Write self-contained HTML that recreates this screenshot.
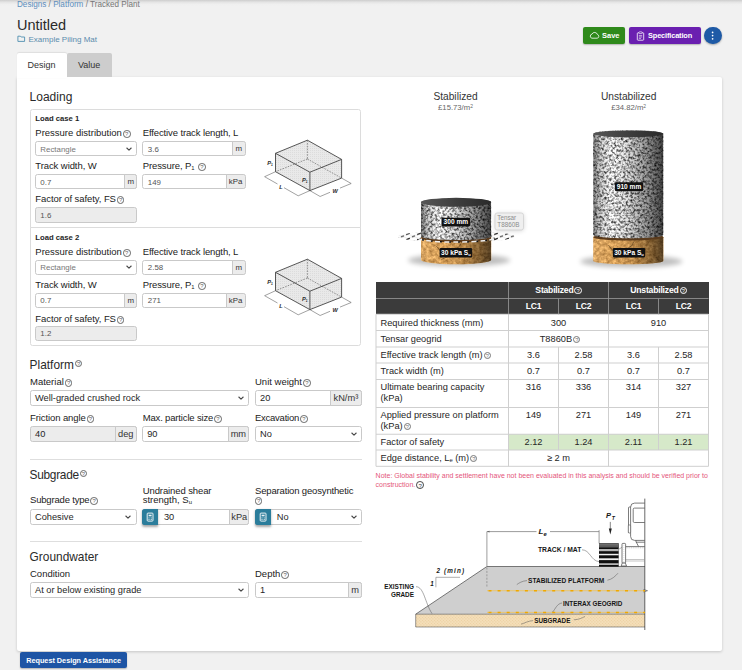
<!DOCTYPE html>
<html lang="en"><head><meta charset="utf-8"><title>Untitled - Tracked Plant</title>
<style>
html,body{margin:0;padding:0;}
body{width:742px;height:670px;overflow:hidden;position:relative;background:#f1f1f1;font-family:"Liberation Sans",sans-serif;color:#333;}
.t{position:absolute;white-space:nowrap;}
.b{position:absolute;}
.q{display:inline-block;position:relative;box-sizing:border-box;border:0.7px solid #555;border-radius:50%;text-align:center;margin-left:1px;font-weight:400;vertical-align:baseline;font-style:normal;}
.inp{position:absolute;box-sizing:border-box;border:1px solid #c9c9c9;border-radius:2.5px;}
.addon{position:absolute;box-sizing:border-box;border:1px solid #c9c9c9;border-radius:0 2.5px 2.5px 0;background:#ececec;text-align:center;color:#333;}
.cbtn{position:absolute;background:#2b7d9b;border-radius:2.5px 0 0 2.5px;box-shadow:0 1.5px 2.5px rgba(0,0,0,.35);}
.hr{position:absolute;height:1px;background:#dedede;}
sub{font-size:5.9px;vertical-align:baseline;position:relative;top:0.25em;line-height:0;}
sup{font-size:4.9px;vertical-align:baseline;position:relative;top:-0.45em;line-height:0;}
</style></head><body>

<div class="b" style="left:0;top:0;width:742px;height:6px;background:linear-gradient(#cdcdcd,#e4e4e4 35%,#efefef 70%,#f1f1f1);"></div>
<div class="t " style="left:17.00px;top:0px;font-size:8.15px;line-height:9px;height:9px;color:#777;"><span style="color:#5d8fbd">Designs</span> / <span style="color:#5d8fbd">Platform</span> / Tracked Plant</div>
<div class="t " style="left:17.00px;top:17px;font-size:14.5px;line-height:16px;height:16px;color:#2a2a2a;">Untitled</div>
<svg class="b" style="left:17px;top:35px" width="9" height="8" viewBox="0 0 9 8"><path d="M0.9 1.2 H3.4 L4.1 2 H7.6 V6.4 H0.9 Z" fill="none" stroke="#4f8fb0" stroke-width="0.9" stroke-linejoin="round"/></svg>
<div class="t " style="left:28.50px;top:35px;font-size:8px;line-height:9px;height:9px;color:#5a8cad;">Example Piling Mat</div>
<div class="b" style="left:583px;top:27px;width:42px;height:17px;background:#2f8a1b;border-radius:2px;box-shadow:0 1px 1.5px rgba(0,0,0,.25);"></div>
<svg class="b" style="left:589px;top:31px" width="11" height="9" viewBox="0 0 11 9"><path d="M2.9 7.2 H8.2 A1.9 1.9 0 0 0 8.4 3.5 A2.9 2.9 0 0 0 3 3.1 A2.1 2.1 0 0 0 2.9 7.2 Z" fill="none" stroke="#fff" stroke-width="0.8"/></svg>
<div class="t " style="left:602.00px;top:31px;font-size:7.5px;line-height:9px;height:9px;color:#fff;font-weight:700;">Save</div>
<div class="b" style="left:629px;top:27px;width:71.5px;height:17px;background:#6a1fb0;border-radius:2px;box-shadow:0 1px 1.5px rgba(0,0,0,.25);"></div>
<svg class="b" style="left:635.5px;top:30.5px" width="9" height="10" viewBox="0 0 9 10"><rect x="1.3" y="1.8" width="6.4" height="7.4" rx="0.7" fill="none" stroke="#fff" stroke-width="0.8"/><rect x="3" y="0.8" width="3" height="1.8" rx="0.5" fill="#6a1fb0" stroke="#fff" stroke-width="0.6"/><path d="M2.8 4.6H6.2M2.8 6H6.2M2.8 7.4H5" stroke="#fff" stroke-width="0.6"/></svg>
<div class="t " style="left:648.00px;top:31px;font-size:7.4px;line-height:9px;height:9px;color:#fff;font-weight:700;letter-spacing:-0.15px;">Specification</div>
<div class="b" style="left:704.4px;top:26.8px;width:17.2px;height:17.2px;background:#1e5aa6;border-radius:50%;box-shadow:0 1px 2px rgba(0,0,0,.3);"></div>
<svg class="b" style="left:704.4px;top:26.8px" width="17.2" height="17.2" viewBox="0 0 17.2 17.2"><circle cx="8.6" cy="5.4" r="0.85" fill="#fff"/><circle cx="8.6" cy="8.6" r="0.85" fill="#fff"/><circle cx="8.6" cy="11.8" r="0.85" fill="#fff"/></svg>
<div class="b" style="left:17px;top:77px;width:705px;height:573.5px;background:#fff;border-radius:0 2px 2px 2px;box-shadow:0 1px 3px rgba(0,0,0,.18);"></div>
<div class="b" style="left:17px;top:53.4px;width:49.8px;height:25px;background:#fff;border-radius:2px 2px 0 0;box-shadow:0 -0.5px 1px rgba(0,0,0,.08);"></div>
<div class="b" style="left:66.8px;top:53.4px;width:44.9px;height:23.7px;background:#cdcdcd;border-radius:2px 2px 0 0;"></div>
<div class="t " style="left:27.50px;top:60px;font-size:9px;line-height:10px;height:10px;color:#333;">Design</div>
<div class="t " style="left:78.00px;top:60px;font-size:9px;line-height:10px;height:10px;color:#333;">Value</div>
<div class="t " style="left:29.60px;top:90px;font-size:12px;line-height:14px;height:14px;color:#2a2a2a;">Loading</div>
<div class="b" style="left:30.4px;top:109.3px;width:331px;height:119px;box-sizing:border-box;border:1px solid #dcdcdc;border-radius:2.5px 2.5px 0 0;"></div>
<div class="t " style="left:35.30px;top:114px;font-size:7.7px;line-height:9px;height:9px;color:#1f1f1f;font-weight:700;">Load case 1</div>
<div class="t " style="left:35.30px;top:127px;font-size:9.5px;line-height:11px;height:11px;color:#222;">Pressure distribution<span class="q" style="width:7.6px;height:7.6px;font-size:5.93px;line-height:7.6px;border-color:#666;color:#666;top:0px">?</span></div>
<div class="t " style="left:142.70px;top:127px;font-size:9.5px;line-height:11px;height:11px;color:#222;letter-spacing:-0.12px;">Effective track length, L</div>
<div class="inp" style="left:35.3px;top:141.4px;width:101.89999999999999px;height:15.0px;background:#fff;"></div>
<div class="t " style="left:40.30px;top:145px;font-size:7.9px;line-height:9px;height:9px;color:#777;">Rectangle</div>
<svg class="b" style="left:125.69999999999999px;top:146.20000000000002px" width="6" height="6" viewBox="0 0 6 6"><path d="M0.8 2 L3 4.1 L5.2 2" fill="none" stroke="#444" stroke-width="1.05" stroke-linecap="round" stroke-linejoin="round"/></svg>
<div class="inp" style="left:142.2px;top:141.4px;width:103.30000000000001px;height:15.0px;background:#fff;"></div>
<div class="t " style="left:147.80px;top:145px;font-size:7.9px;line-height:9px;height:9px;color:#555;">3.6</div>
<div class="addon" style="left:232px;top:141.4px;width:13.5px;height:15.0px;font-size:7.9px;line-height:14.0px;">m</div>
<div class="t " style="left:35.30px;top:160px;font-size:9.5px;line-height:11px;height:11px;color:#222;"><span style="letter-spacing:-0.08px">Track width, W</span></div>
<div class="t " style="left:142.70px;top:160px;font-size:9.5px;line-height:11px;height:11px;color:#222;letter-spacing:-0.1px;">Pressure, P<sub>1</sub> <span class="q" style="width:7.6px;height:7.6px;font-size:5.93px;line-height:7.6px;border-color:#666;color:#666;top:0px">?</span></div>
<div class="inp" style="left:35.3px;top:174.2px;width:101.89999999999999px;height:15.100000000000023px;background:#fff;"></div>
<div class="t " style="left:40.30px;top:178px;font-size:7.9px;line-height:9px;height:9px;color:#555;">0.7</div>
<div class="addon" style="left:124.4px;top:174.2px;width:12.799999999999983px;height:15.100000000000023px;font-size:7.9px;line-height:14.100000000000023px;">m</div>
<div class="inp" style="left:142.2px;top:174.2px;width:103.30000000000001px;height:15.100000000000023px;background:#fff;"></div>
<div class="t " style="left:147.80px;top:178px;font-size:7.9px;line-height:9px;height:9px;color:#555;">149</div>
<div class="addon" style="left:225.75px;top:174.2px;width:19.75px;height:15.100000000000023px;font-size:7.9px;line-height:14.100000000000023px;">kPa</div>
<div class="t " style="left:35.30px;top:193px;font-size:9.5px;line-height:11px;height:11px;color:#222;"><span style="letter-spacing:-0.08px">Factor of safety, FS</span><span class="q" style="width:7.6px;height:7.6px;font-size:5.93px;line-height:7.6px;border-color:#666;color:#666;top:0px">?</span></div>
<div class="inp" style="left:35.3px;top:207.4px;width:101.89999999999999px;height:15.199999999999989px;background:#ececec;"></div>
<div class="t " style="left:40.30px;top:211px;font-size:7.9px;line-height:9px;height:9px;color:#555;">1.6</div>
<svg class="b" style="left:255px;top:130.0px" width="105" height="75" viewBox="255 130 105 75">
<defs><pattern id="dots0.0" width="2" height="2" patternUnits="userSpaceOnUse"><rect width="2" height="2" fill="#e9e9e9"/><rect width="1" height="1" fill="#dcdcdc"/></pattern></defs>
<path d="M307.4 140.2 L275.5 153.3 L275.5 171.7 L309.9 190.6 L341.6 178.1 L341.6 159.4 Z" fill="url(#dots0.0)" stroke="none"/>
<path d="M307.4 140.2 L307.4 159 M307.4 159 L275.5 171.7 M307.4 159 L341.6 178.1" fill="none" stroke="#555" stroke-width="0.6" stroke-dasharray="1.6 1.2"/>
<path d="M307.4 140.2 L275.5 153.3 L309.9 172.2 L341.6 159.4 Z M275.5 153.3 L275.5 171.7 L309.9 190.6 L341.6 178.1 L341.6 159.4 M309.9 172.2 L309.9 190.6" fill="none" stroke="#444" stroke-width="0.9" stroke-linejoin="round"/>
<path d="M275.5 171.7 L264.6 176.7 L277.5 184 M284 187.7 L298.2 195.8 L309.9 190.6 L320.1 196.5 L330 192.3 M340 188.1 L351.2 183.5 L341.6 178.1" fill="none" stroke="#444" stroke-width="0.5"/>
<text x="267.2" y="164.6" font-family="Liberation Sans, sans-serif" font-size="5.7" font-weight="700" font-style="italic" fill="#2a2a2a">P<tspan font-size="3.2" dy="1">1</tspan></text>
<text x="302" y="181.8" font-family="Liberation Sans, sans-serif" font-size="5.7" font-weight="700" font-style="italic" fill="#2a2a2a">P<tspan font-size="3.2" dy="1">1</tspan></text>
<text x="279.2" y="189.2" font-family="Liberation Sans, sans-serif" font-size="5.6" font-weight="700" font-style="italic" fill="#2a2a2a">L</text>
<text x="332.6" y="192.6" font-family="Liberation Sans, sans-serif" font-size="5.6" font-weight="700" font-style="italic" fill="#2a2a2a">W</text>
</svg>
<div class="b" style="left:30.4px;top:227.3px;width:331px;height:119px;box-sizing:border-box;border:1px solid #dcdcdc;border-radius:0 0 2.5px 2.5px;"></div>
<div class="t " style="left:35.30px;top:233px;font-size:7.7px;line-height:9px;height:9px;color:#1f1f1f;font-weight:700;">Load case 2</div>
<div class="t " style="left:35.30px;top:246px;font-size:9.5px;line-height:11px;height:11px;color:#222;">Pressure distribution<span class="q" style="width:7.6px;height:7.6px;font-size:5.93px;line-height:7.6px;border-color:#666;color:#666;top:0px">?</span></div>
<div class="t " style="left:142.70px;top:246px;font-size:9.5px;line-height:11px;height:11px;color:#222;letter-spacing:-0.12px;">Effective track length, L</div>
<div class="inp" style="left:35.3px;top:259.7px;width:101.89999999999999px;height:14.900000000000034px;background:#fff;"></div>
<div class="t " style="left:40.30px;top:263px;font-size:7.9px;line-height:9px;height:9px;color:#777;">Rectangle</div>
<svg class="b" style="left:125.69999999999999px;top:264.45px" width="6" height="6" viewBox="0 0 6 6"><path d="M0.8 2 L3 4.1 L5.2 2" fill="none" stroke="#444" stroke-width="1.05" stroke-linecap="round" stroke-linejoin="round"/></svg>
<div class="inp" style="left:142.2px;top:259.7px;width:103.30000000000001px;height:14.900000000000034px;background:#fff;"></div>
<div class="t " style="left:147.80px;top:263px;font-size:7.9px;line-height:9px;height:9px;color:#555;">2.58</div>
<div class="addon" style="left:232px;top:259.7px;width:13.5px;height:14.900000000000034px;font-size:7.9px;line-height:13.900000000000034px;">m</div>
<div class="t " style="left:35.30px;top:279px;font-size:9.5px;line-height:11px;height:11px;color:#222;"><span style="letter-spacing:-0.08px">Track width, W</span></div>
<div class="t " style="left:142.70px;top:279px;font-size:9.5px;line-height:11px;height:11px;color:#222;letter-spacing:-0.1px;">Pressure, P<sub>1</sub> <span class="q" style="width:7.6px;height:7.6px;font-size:5.93px;line-height:7.6px;border-color:#666;color:#666;top:0px">?</span></div>
<div class="inp" style="left:35.3px;top:293px;width:101.89999999999999px;height:14.699999999999989px;background:#fff;"></div>
<div class="t " style="left:40.30px;top:296px;font-size:7.9px;line-height:9px;height:9px;color:#555;">0.7</div>
<div class="addon" style="left:124.4px;top:293px;width:12.799999999999983px;height:14.699999999999989px;font-size:7.9px;line-height:13.699999999999989px;">m</div>
<div class="inp" style="left:142.2px;top:293px;width:103.30000000000001px;height:14.699999999999989px;background:#fff;"></div>
<div class="t " style="left:147.80px;top:296px;font-size:7.9px;line-height:9px;height:9px;color:#555;">271</div>
<div class="addon" style="left:225.75px;top:293px;width:19.75px;height:14.699999999999989px;font-size:7.9px;line-height:13.699999999999989px;">kPa</div>
<div class="t " style="left:35.30px;top:313px;font-size:9.5px;line-height:11px;height:11px;color:#222;"><span style="letter-spacing:-0.08px">Factor of safety, FS</span><span class="q" style="width:7.6px;height:7.6px;font-size:5.93px;line-height:7.6px;border-color:#666;color:#666;top:0px">?</span></div>
<div class="inp" style="left:35.3px;top:326.3px;width:101.89999999999999px;height:14.5px;background:#ececec;"></div>
<div class="t " style="left:40.30px;top:329px;font-size:7.9px;line-height:9px;height:9px;color:#555;">1.2</div>
<svg class="b" style="left:255px;top:248.5px" width="105" height="75" viewBox="255 130 105 75">
<defs><pattern id="dots118.5" width="2" height="2" patternUnits="userSpaceOnUse"><rect width="2" height="2" fill="#e9e9e9"/><rect width="1" height="1" fill="#dcdcdc"/></pattern></defs>
<path d="M307.4 140.2 L275.5 153.3 L275.5 171.7 L309.9 190.6 L341.6 178.1 L341.6 159.4 Z" fill="url(#dots118.5)" stroke="none"/>
<path d="M307.4 140.2 L307.4 159 M307.4 159 L275.5 171.7 M307.4 159 L341.6 178.1" fill="none" stroke="#555" stroke-width="0.6" stroke-dasharray="1.6 1.2"/>
<path d="M307.4 140.2 L275.5 153.3 L309.9 172.2 L341.6 159.4 Z M275.5 153.3 L275.5 171.7 L309.9 190.6 L341.6 178.1 L341.6 159.4 M309.9 172.2 L309.9 190.6" fill="none" stroke="#444" stroke-width="0.9" stroke-linejoin="round"/>
<path d="M275.5 171.7 L264.6 176.7 L277.5 184 M284 187.7 L298.2 195.8 L309.9 190.6 L320.1 196.5 L330 192.3 M340 188.1 L351.2 183.5 L341.6 178.1" fill="none" stroke="#444" stroke-width="0.5"/>
<text x="267.2" y="164.6" font-family="Liberation Sans, sans-serif" font-size="5.7" font-weight="700" font-style="italic" fill="#2a2a2a">P<tspan font-size="3.2" dy="1">1</tspan></text>
<text x="302" y="181.8" font-family="Liberation Sans, sans-serif" font-size="5.7" font-weight="700" font-style="italic" fill="#2a2a2a">P<tspan font-size="3.2" dy="1">1</tspan></text>
<text x="279.2" y="189.2" font-family="Liberation Sans, sans-serif" font-size="5.6" font-weight="700" font-style="italic" fill="#2a2a2a">L</text>
<text x="332.6" y="192.6" font-family="Liberation Sans, sans-serif" font-size="5.6" font-weight="700" font-style="italic" fill="#2a2a2a">W</text>
</svg>
<div class="t " style="left:29.60px;top:358px;font-size:11.9px;line-height:14px;height:14px;color:#2a2a2a;">Platform<span style="position:relative;top:-3.4px"><span class="q" style="width:7.4px;height:7.4px;font-size:5.77px;line-height:7.4px;border-color:#666;color:#666;top:0px">?</span></span></div>
<div class="t " style="left:30.00px;top:376px;font-size:9.5px;line-height:11px;height:11px;color:#222;">Material<span class="q" style="width:7.6px;height:7.6px;font-size:5.93px;line-height:7.6px;border-color:#666;color:#666;top:0px">?</span></div>
<div class="t " style="left:255.00px;top:376px;font-size:9.5px;line-height:11px;height:11px;color:#222;">Unit weight<span class="q" style="width:7.6px;height:7.6px;font-size:5.93px;line-height:7.6px;border-color:#666;color:#666;top:0px">?</span></div>
<div class="inp" style="left:30px;top:389.8px;width:219.25px;height:15.800000000000011px;background:#fff;"></div>
<div class="t " style="left:35.00px;top:393px;font-size:9.25px;line-height:10px;height:10px;color:#262626;">Well-graded crushed rock</div>
<svg class="b" style="left:237.75px;top:395.00000000000006px" width="6" height="6" viewBox="0 0 6 6"><path d="M0.8 2 L3 4.1 L5.2 2" fill="none" stroke="#444" stroke-width="1.05" stroke-linecap="round" stroke-linejoin="round"/></svg>
<div class="inp" style="left:255px;top:389.8px;width:107.30000000000001px;height:15.800000000000011px;background:#fff;"></div>
<div class="t " style="left:260.00px;top:393px;font-size:9.25px;line-height:10px;height:10px;color:#262626;">20</div>
<div class="addon" style="left:329.5px;top:389.8px;width:32.80000000000001px;height:15.800000000000011px;font-size:9.25px;line-height:14.800000000000011px;">kN/m³</div>
<div class="t " style="left:30.00px;top:412px;font-size:9.5px;line-height:11px;height:11px;color:#222;"><span style="letter-spacing:-0.1px">Friction angle</span><span class="q" style="width:7.6px;height:7.6px;font-size:5.93px;line-height:7.6px;border-color:#666;color:#666;top:0px">?</span></div>
<div class="t " style="left:142.70px;top:412px;font-size:9.5px;line-height:11px;height:11px;color:#222;"><span style="letter-spacing:-0.16px">Max. particle size</span><span class="q" style="width:7.6px;height:7.6px;font-size:5.93px;line-height:7.6px;border-color:#666;color:#666;top:0px">?</span></div>
<div class="t " style="left:255.00px;top:412px;font-size:9.5px;line-height:11px;height:11px;color:#222;"><span style="letter-spacing:-0.25px">Excavation</span><span class="q" style="width:7.6px;height:7.6px;font-size:5.93px;line-height:7.6px;border-color:#666;color:#666;top:0px">?</span></div>
<div class="inp" style="left:30px;top:425.75px;width:106.5px;height:16.25px;background:#ececec;"></div>
<div class="t " style="left:35.00px;top:429px;font-size:9.25px;line-height:10px;height:10px;color:#262626;">40</div>
<div class="addon" style="left:115px;top:425.75px;width:21.5px;height:16.25px;font-size:9.25px;line-height:15.25px;">deg</div>
<div class="inp" style="left:142.2px;top:425.75px;width:107.05000000000001px;height:16.25px;background:#fff;"></div>
<div class="t " style="left:147.20px;top:429px;font-size:9.25px;line-height:10px;height:10px;color:#262626;">90</div>
<div class="addon" style="left:227.5px;top:425.75px;width:21.75px;height:16.25px;font-size:9.25px;line-height:15.25px;">mm</div>
<div class="inp" style="left:255px;top:425.75px;width:107.30000000000001px;height:16.25px;background:#fff;"></div>
<div class="t " style="left:260.00px;top:429px;font-size:9.25px;line-height:10px;height:10px;color:#262626;">No</div>
<svg class="b" style="left:350.8px;top:431.175px" width="6" height="6" viewBox="0 0 6 6"><path d="M0.8 2 L3 4.1 L5.2 2" fill="none" stroke="#444" stroke-width="1.05" stroke-linecap="round" stroke-linejoin="round"/></svg>
<div class="hr" style="left:30px;top:458.6px;width:332px;"></div>
<div class="t " style="left:29.60px;top:468px;font-size:11.9px;line-height:14px;height:14px;color:#2a2a2a;"><span style="letter-spacing:-0.3px">Subgrade</span><span style="position:relative;top:-3.4px"><span class="q" style="width:7.4px;height:7.4px;font-size:5.77px;line-height:7.4px;border-color:#666;color:#666;top:0px">?</span></span></div>
<div class="t " style="left:30.00px;top:494px;font-size:9.5px;line-height:11px;height:11px;color:#222;"><span style="letter-spacing:-0.18px">Subgrade type</span><span class="q" style="width:7.6px;height:7.6px;font-size:5.93px;line-height:7.6px;border-color:#666;color:#666;top:0px">?</span></div>
<div class="t " style="left:142.70px;top:485px;font-size:9.5px;line-height:11px;height:11px;color:#222;"><span style="letter-spacing:-0.1px">Undrained shear</span></div>
<div class="t " style="left:142.70px;top:494px;font-size:9.5px;line-height:11px;height:11px;color:#222;">strength, S<sub>u</sub></div>
<div class="t " style="left:255.00px;top:485px;font-size:9.5px;line-height:11px;height:11px;color:#222;"><span style="letter-spacing:-0.16px">Separation geosynthetic</span></div>
<div class="t " style="left:253.80px;top:494px;font-size:9.5px;line-height:11px;height:11px;color:#222;"><span class="q" style="width:7.6px;height:7.6px;font-size:5.93px;line-height:7.6px;border-color:#666;color:#666;top:0px">?</span></div>
<div class="inp" style="left:30px;top:508.6px;width:106.5px;height:16.199999999999932px;background:#fff;"></div>
<div class="t " style="left:35.00px;top:512px;font-size:9.25px;line-height:10px;height:10px;color:#262626;">Cohesive</div>
<svg class="b" style="left:125.0px;top:514.0px" width="6" height="6" viewBox="0 0 6 6"><path d="M0.8 2 L3 4.1 L5.2 2" fill="none" stroke="#444" stroke-width="1.05" stroke-linecap="round" stroke-linejoin="round"/></svg>
<div class="inp" style="left:142.2px;top:508.6px;width:107.05000000000001px;height:16.199999999999932px;background:#fff;"></div>
<div class="cbtn" style="left:142.2px;top:508.6px;width:16.25px;height:16.199999999999932px;"><svg width="16.25" height="16.199999999999932" viewBox="0 0 16.25 16"><rect x="5.2" y="4" width="5.8" height="8" rx="0.8" fill="none" stroke="#fff" stroke-width="0.9"/><rect x="6.6" y="5.6" width="3" height="1.6" fill="#fff" opacity="0.9"/><rect x="6.5" y="8.4" width="1" height="0.9" fill="#fff"/><rect x="8.7" y="8.4" width="1" height="0.9" fill="#fff"/><rect x="6.5" y="10" width="1" height="0.9" fill="#fff"/><rect x="8.7" y="10" width="1" height="0.9" fill="#fff"/></svg></div>
<div class="t " style="left:163.95px;top:512px;font-size:9.25px;line-height:10px;height:10px;color:#262626;">30</div>
<div class="addon" style="left:229.25px;top:508.6px;width:20.0px;height:16.199999999999932px;font-size:9.25px;line-height:15.199999999999932px;">kPa</div>
<div class="inp" style="left:255px;top:508.6px;width:107.30000000000001px;height:16.199999999999932px;background:#fff;"></div>
<div class="cbtn" style="left:255px;top:508.6px;width:16.25px;height:16.199999999999932px;"><svg width="16.25" height="16.199999999999932" viewBox="0 0 16.25 16"><rect x="5.2" y="4" width="5.8" height="8" rx="0.8" fill="none" stroke="#fff" stroke-width="0.9"/><rect x="6.6" y="5.6" width="3" height="1.6" fill="#fff" opacity="0.9"/><rect x="6.5" y="8.4" width="1" height="0.9" fill="#fff"/><rect x="8.7" y="8.4" width="1" height="0.9" fill="#fff"/><rect x="6.5" y="10" width="1" height="0.9" fill="#fff"/><rect x="8.7" y="10" width="1" height="0.9" fill="#fff"/></svg></div>
<div class="t " style="left:276.75px;top:512px;font-size:9.25px;line-height:10px;height:10px;color:#262626;">No</div>
<svg class="b" style="left:350.8px;top:514.0px" width="6" height="6" viewBox="0 0 6 6"><path d="M0.8 2 L3 4.1 L5.2 2" fill="none" stroke="#444" stroke-width="1.05" stroke-linecap="round" stroke-linejoin="round"/></svg>
<div class="hr" style="left:30px;top:541px;width:332px;"></div>
<div class="t " style="left:29.60px;top:550px;font-size:11.9px;line-height:14px;height:14px;color:#2a2a2a;">Groundwater</div>
<div class="t " style="left:30.00px;top:568px;font-size:9.5px;line-height:11px;height:11px;color:#222;">Condition</div>
<div class="t " style="left:255.00px;top:568px;font-size:9.5px;line-height:11px;height:11px;color:#222;">Depth<span class="q" style="width:7.6px;height:7.6px;font-size:5.93px;line-height:7.6px;border-color:#666;color:#666;top:0px">?</span></div>
<div class="inp" style="left:30px;top:582px;width:219.25px;height:16.25px;background:#fff;"></div>
<div class="t " style="left:35.00px;top:585px;font-size:9.25px;line-height:10px;height:10px;color:#262626;">At or below existing grade</div>
<svg class="b" style="left:237.75px;top:587.425px" width="6" height="6" viewBox="0 0 6 6"><path d="M0.8 2 L3 4.1 L5.2 2" fill="none" stroke="#444" stroke-width="1.05" stroke-linecap="round" stroke-linejoin="round"/></svg>
<div class="inp" style="left:255px;top:582px;width:107.30000000000001px;height:16.25px;background:#fff;"></div>
<div class="t " style="left:260.00px;top:585px;font-size:9.25px;line-height:10px;height:10px;color:#262626;">1</div>
<div class="addon" style="left:348px;top:582px;width:14.300000000000011px;height:16.25px;font-size:9.25px;line-height:15.25px;">m</div>
<div class="b" style="left:20.4px;top:652px;width:106.6px;height:15.8px;background:#1e55a5;border-radius:2px;box-shadow:0 1px 1.5px rgba(0,0,0,.25);"></div>
<div class="t " style="left:26.20px;top:656px;font-size:7.3px;line-height:9px;height:9px;color:#fff;font-weight:700;letter-spacing:-0.02px;">Request Design Assistance</div>
<div class="t" style="left:305.50px;width:300px;text-align:center;top:91px;font-size:10.2px;line-height:11px;height:11px;color:#333;">Stabilized</div>
<div class="t" style="left:305.50px;width:300px;text-align:center;top:103px;font-size:7.7px;line-height:9px;height:9px;color:#666;">£15.73/m<sup>2</sup></div>
<div class="t" style="left:478.70px;width:300px;text-align:center;top:91px;font-size:10.2px;line-height:11px;height:11px;color:#333;">Unstabilized</div>
<div class="t" style="left:478.70px;width:300px;text-align:center;top:103px;font-size:7.7px;line-height:9px;height:9px;color:#666;">£34.82/m<sup>2</sup></div>
<svg class="b" style="left:390px;top:120px" width="330" height="160" viewBox="390 120 330 160">
<defs>
<filter id="fg" x="0" y="0" width="100%" height="100%" color-interpolation-filters="sRGB">
<feTurbulence type="fractalNoise" baseFrequency="0.42" numOctaves="2" seed="7"/>
<feColorMatrix type="matrix" values="1.9 0 0 0 -0.17  1.9 0 0 0 -0.17  1.9 0 0 0 -0.17  0 0 0 0 1"/>
<feGaussianBlur stdDeviation="0.55"/>
</filter>
<filter id="fs" x="0" y="0" width="100%" height="100%" color-interpolation-filters="sRGB">
<feTurbulence type="fractalNoise" baseFrequency="0.3" numOctaves="3" seed="11"/>
<feColorMatrix type="matrix" values="0.55 0 0 0 0.56  0.5 0 0 0 0.36  0.4 0 0 0 0.12  0 0 0 0 1"/>
</filter>
<filter id="blur" x="-20%" y="-100%" width="140%" height="300%"><feGaussianBlur stdDeviation="2.6"/></filter>
<linearGradient id="gsh" x1="0" x2="1" y1="0" y2="0">
<stop offset="0" stop-color="#000" stop-opacity="0.5"/>
<stop offset="0.08" stop-color="#000" stop-opacity="0.22"/>
<stop offset="0.27" stop-color="#fff" stop-opacity="0.1"/>
<stop offset="0.5" stop-color="#000" stop-opacity="0.12"/>
<stop offset="0.78" stop-color="#000" stop-opacity="0.42"/>
<stop offset="1" stop-color="#000" stop-opacity="0.72"/>
</linearGradient>
<linearGradient id="ssh" x1="0" x2="1" y1="0" y2="0">
<stop offset="0" stop-color="#fff" stop-opacity="0.1"/>
<stop offset="0.3" stop-color="#fff" stop-opacity="0.04"/>
<stop offset="0.6" stop-color="#000" stop-opacity="0.14"/>
<stop offset="0.85" stop-color="#000" stop-opacity="0.42"/>
<stop offset="1" stop-color="#000" stop-opacity="0.62"/>
</linearGradient>
<linearGradient id="topg" x1="0" x2="1" y1="0" y2="0">
<stop offset="0" stop-color="#565656"/><stop offset="0.5" stop-color="#3e3e3e"/><stop offset="1" stop-color="#2a2a2a"/>
</linearGradient>
<pattern id="grid" width="11" height="5.2" patternUnits="userSpaceOnUse" patternTransform="translate(397 231.2)">
<rect width="11" height="5.2" fill="#fdfdfd"/>
<path d="M0 2.6 L5.5 0 L11 2.6 L5.5 5.2 Z" fill="#fff" stroke="#d9d9d9" stroke-width="0.6"/>
<path d="M-1.8 3.4 L1.8 1.8 M9.2 3.4 L12.8 1.8" stroke="#111" stroke-width="1.3"/>
<path d="M4 0.6 L7 -0.6 M4 5.8 L7 4.6" stroke="#222" stroke-width="1"/>
</pattern>
</defs>
<ellipse cx="459.1" cy="260.3" rx="51.099999999999994" ry="6" fill="#000" opacity="0.26" filter="url(#blur)"/>
<ellipse cx="456.1" cy="236.5" rx="58.5" ry="5.8" fill="url(#grid)" opacity="0.95"/>
<clipPath id="csa"><path d="M421 237.8 L421 259.8 A35.099999999999994 4.5 0 0 0 491.2 259.8 L491.2 237.8 A35.099999999999994 4.5 0 0 0 421 237.8 Z"/></clipPath>
<g clip-path="url(#csa)"><rect x="421" y="232.3" width="70.19999999999999" height="33.0" filter="url(#fs)"/><rect x="421" y="232.3" width="70.19999999999999" height="33.0" fill="url(#ssh)"/></g>
<ellipse cx="456.1" cy="237.8" rx="35.099999999999994" ry="4.5" fill="#5a3a1c"/>
<path d="M462.1 241.8 l-3 5 l-5 3 l-7 7 l-6 3 M436.1 245.8 l5 6 M484.2 255.8 l1.5 3" fill="none" stroke="#2a1a0a" stroke-width="0.6" opacity="0.7"/>
<clipPath id="cga"><path d="M421 202.3 L421 236.2 A35.099999999999994 3.8 0 0 0 491.2 236.2 L491.2 202.3 A35.099999999999994 3.8 0 0 0 421 202.3 Z"/></clipPath>
<g clip-path="url(#cga)"><rect x="421" y="196.3" width="70.19999999999999" height="47.89999999999998" filter="url(#fg)"/><rect x="421" y="196.3" width="70.19999999999999" height="47.89999999999998" fill="url(#gsh)"/></g>
<ellipse cx="456.1" cy="202.3" rx="35.099999999999994" ry="4.5" fill="url(#topg)"/>
<path d="M418 237.79999999999998 A38.099999999999994 4.3 0 0 0 494.2 237.79999999999998" fill="none" stroke="#ededed" stroke-width="1.5" stroke-dasharray="6 3"/>
<path d="M418 237.79999999999998 A38.099999999999994 4.3 0 0 0 494.2 237.79999999999998" fill="none" stroke="#111" stroke-width="1.5" stroke-dasharray="1.8 7.2" stroke-dashoffset="-4.8"/>
<ellipse cx="631.3" cy="261.5" rx="51.099999999999966" ry="6" fill="#000" opacity="0.26" filter="url(#blur)"/>
<clipPath id="csb"><path d="M593.2 237.2 L593.2 261 A35.099999999999966 3.2 0 0 0 663.4 261 L663.4 237.2 A35.099999999999966 3.2 0 0 0 593.2 237.2 Z"/></clipPath>
<g clip-path="url(#csb)"><rect x="593.2" y="233.0" width="70.19999999999993" height="32.20000000000001" filter="url(#fs)"/><rect x="593.2" y="233.0" width="70.19999999999993" height="32.20000000000001" fill="url(#ssh)"/></g>
<ellipse cx="628.3" cy="237.2" rx="35.099999999999966" ry="3.2" fill="#5a3a1c"/>
<path d="M634.3 241.2 l-3 5 l-5 3 l-7 7 l-6 3 M608.3 245.2 l5 6 M656.4 257 l1.5 3" fill="none" stroke="#2a1a0a" stroke-width="0.6" opacity="0.7"/>
<clipPath id="cgb"><path d="M593.2 133.8 L593.2 234.8 A35.099999999999966 3.5 0 0 0 663.4 234.8 L663.4 133.8 A35.099999999999966 3.5 0 0 0 593.2 133.8 Z"/></clipPath>
<g clip-path="url(#cgb)"><rect x="593.2" y="127.80000000000001" width="70.19999999999993" height="115.0" filter="url(#fg)"/><rect x="593.2" y="127.80000000000001" width="70.19999999999993" height="115.0" fill="url(#gsh)"/></g>
<ellipse cx="628.3" cy="133.8" rx="35.099999999999966" ry="3.4" fill="url(#topg)"/>
<rect x="441.5" y="217.7" width="28.69999999999999" height="8.800000000000011" rx="1.4" fill="#111"/>
<text x="455.85" y="224.4" text-anchor="middle" font-family="Liberation Sans, sans-serif" font-size="6.6" font-weight="700" fill="#fff">300 mm</text>
<rect x="439.6" y="247.9" width="32.599999999999966" height="9.700000000000017" rx="1.4" fill="#111"/>
<text x="455.9" y="255.05" text-anchor="middle" font-family="Liberation Sans, sans-serif" font-size="6.6" font-weight="700" fill="#fff">30 kPa S<tspan font-size="4" dy="1">u</tspan></text>
<rect x="614.8" y="182.2" width="28.40000000000009" height="9.0" rx="1.4" fill="#111"/>
<text x="629.0" y="189.0" text-anchor="middle" font-family="Liberation Sans, sans-serif" font-size="6.6" font-weight="700" fill="#fff">910 mm</text>
<rect x="612.8" y="247.9" width="32.40000000000009" height="9.499999999999972" rx="1.4" fill="#111"/>
<text x="629.0" y="254.95" text-anchor="middle" font-family="Liberation Sans, sans-serif" font-size="6.6" font-weight="700" fill="#fff">30 kPa S<tspan font-size="4" dy="1">u</tspan></text>
<rect x="495.5" y="213.8" width="28" height="17" rx="2.2" fill="#000" opacity="0.18" filter="url(#blur)"/>
<rect x="495" y="213" width="28.5" height="17" rx="2.2" fill="#efefef" stroke="#cdcdcd" stroke-width="0.7"/>
<text font-family="Liberation Sans, sans-serif" font-size="6.3" fill="#8c8c8c"><tspan x="497.3" y="220.4">Tensar</tspan><tspan x="497.3" y="227">T8860B</tspan></text>
</svg>
<div class="b" style="left:376px;top:282px;width:332.5px;height:32.25px;background:#3b3b3b;"></div>
<div class="b" style="left:508.5px;top:434.25px;width:200px;height:15.75px;background:#d6e9c9;"></div>
<svg class="b" style="left:370px;top:278px" width="345" height="192" viewBox="370 278 345 192">
<path d="M376 314.25 H708.5" stroke="#cfcfcf" stroke-width="1"/>
<path d="M376 330.5 H708.5" stroke="#cfcfcf" stroke-width="1"/>
<path d="M376 347 H708.5" stroke="#cfcfcf" stroke-width="1"/>
<path d="M376 363 H708.5" stroke="#cfcfcf" stroke-width="1"/>
<path d="M376 379.5 H708.5" stroke="#cfcfcf" stroke-width="1"/>
<path d="M376 407.5 H708.5" stroke="#cfcfcf" stroke-width="1"/>
<path d="M376 434.25 H708.5" stroke="#cfcfcf" stroke-width="1"/>
<path d="M376 450 H708.5" stroke="#cfcfcf" stroke-width="1"/>
<path d="M376 466.3 H708.5" stroke="#cfcfcf" stroke-width="1"/>
<path d="M376 314.25 V466.3" stroke="#cfcfcf" stroke-width="1"/>
<path d="M508.5 314.25 V466.3" stroke="#cfcfcf" stroke-width="1"/>
<path d="M608.5 314.25 V466.3" stroke="#cfcfcf" stroke-width="1"/>
<path d="M708.5 314.25 V466.3" stroke="#cfcfcf" stroke-width="1"/>
<path d="M558.5 347 V450" stroke="#cfcfcf" stroke-width="1"/>
<path d="M658.5 347 V450" stroke="#cfcfcf" stroke-width="1"/>
<path d="M376 298.5 H708.5" stroke="#9a9a9a" stroke-width="0.8"/>
<path d="M508.5 282 V314.25" stroke="#9a9a9a" stroke-width="0.8"/>
<path d="M608.5 282 V314.25" stroke="#9a9a9a" stroke-width="0.8"/>
<path d="M558.5 298.5 V314.25" stroke="#9a9a9a" stroke-width="0.8"/>
<path d="M658.5 298.5 V314.25" stroke="#9a9a9a" stroke-width="0.8"/>
</svg>
<div class="t" style="left:408.50px;width:300px;text-align:center;top:285px;font-size:8.6px;line-height:10px;height:10px;color:#fff;font-weight:700;letter-spacing:-0.2px;">Stabilized<span class="q" style="width:7.2px;height:7.2px;font-size:5.62px;line-height:7.2px;border-color:#fff;color:#fff;top:0px">?</span></div>
<div class="t" style="left:508.50px;width:300px;text-align:center;top:285px;font-size:8.6px;line-height:10px;height:10px;color:#fff;font-weight:700;letter-spacing:-0.2px;">Unstabilized<span class="q" style="width:7.2px;height:7.2px;font-size:5.62px;line-height:7.2px;border-color:#fff;color:#fff;top:0px">?</span></div>
<div class="t" style="left:383.50px;width:300px;text-align:center;top:301px;font-size:8.6px;line-height:10px;height:10px;color:#fff;font-weight:700;letter-spacing:-0.2px;">LC1</div>
<div class="t" style="left:433.50px;width:300px;text-align:center;top:301px;font-size:8.6px;line-height:10px;height:10px;color:#fff;font-weight:700;letter-spacing:-0.2px;">LC2</div>
<div class="t" style="left:483.50px;width:300px;text-align:center;top:301px;font-size:8.6px;line-height:10px;height:10px;color:#fff;font-weight:700;letter-spacing:-0.2px;">LC1</div>
<div class="t" style="left:533.50px;width:300px;text-align:center;top:301px;font-size:8.6px;line-height:10px;height:10px;color:#fff;font-weight:700;letter-spacing:-0.2px;">LC2</div>
<div class="t " style="left:380.50px;top:318px;font-size:9.25px;line-height:10px;height:10px;color:#262626;">Required thickness (mm)</div>
<div class="t" style="left:408.50px;width:300px;text-align:center;top:318px;font-size:9.25px;line-height:10px;height:10px;color:#262626;">300</div>
<div class="t" style="left:508.50px;width:300px;text-align:center;top:318px;font-size:9.25px;line-height:10px;height:10px;color:#262626;">910</div>
<div class="t " style="left:380.50px;top:334px;font-size:9.25px;line-height:10px;height:10px;color:#262626;">Tensar geogrid</div>
<div class="t" style="left:410.00px;width:300px;text-align:center;top:334px;font-size:9.25px;line-height:10px;height:10px;color:#262626;">T8860B<span class="q" style="width:7.2px;height:7.2px;font-size:5.62px;line-height:7.2px;border-color:#777;color:#777;top:0px">?</span></div>
<div class="t " style="left:380.50px;top:350px;font-size:9.25px;line-height:10px;height:10px;color:#262626;">Effective track length (m)<span class="q" style="width:7.2px;height:7.2px;font-size:5.62px;line-height:7.2px;border-color:#777;color:#777;top:0px">?</span></div>
<div class="t" style="left:383.50px;width:300px;text-align:center;top:350px;font-size:9.25px;line-height:10px;height:10px;color:#262626;">3.6</div>
<div class="t" style="left:433.50px;width:300px;text-align:center;top:350px;font-size:9.25px;line-height:10px;height:10px;color:#262626;">2.58</div>
<div class="t" style="left:483.50px;width:300px;text-align:center;top:350px;font-size:9.25px;line-height:10px;height:10px;color:#262626;">3.6</div>
<div class="t" style="left:533.50px;width:300px;text-align:center;top:350px;font-size:9.25px;line-height:10px;height:10px;color:#262626;">2.58</div>
<div class="t " style="left:380.50px;top:366px;font-size:9.25px;line-height:10px;height:10px;color:#262626;">Track width (m)</div>
<div class="t" style="left:383.50px;width:300px;text-align:center;top:366px;font-size:9.25px;line-height:10px;height:10px;color:#262626;">0.7</div>
<div class="t" style="left:433.50px;width:300px;text-align:center;top:366px;font-size:9.25px;line-height:10px;height:10px;color:#262626;">0.7</div>
<div class="t" style="left:483.50px;width:300px;text-align:center;top:366px;font-size:9.25px;line-height:10px;height:10px;color:#262626;">0.7</div>
<div class="t" style="left:533.50px;width:300px;text-align:center;top:366px;font-size:9.25px;line-height:10px;height:10px;color:#262626;">0.7</div>
<div class="t " style="left:380.50px;top:382px;font-size:9.25px;line-height:10px;height:10px;color:#262626;">Ultimate bearing capacity</div>
<div class="t " style="left:380.50px;top:393px;font-size:9.25px;line-height:10px;height:10px;color:#262626;">(kPa)</div>
<div class="t" style="left:383.50px;width:300px;text-align:center;top:382px;font-size:9.25px;line-height:10px;height:10px;color:#262626;">316</div>
<div class="t" style="left:433.50px;width:300px;text-align:center;top:382px;font-size:9.25px;line-height:10px;height:10px;color:#262626;">336</div>
<div class="t" style="left:483.50px;width:300px;text-align:center;top:382px;font-size:9.25px;line-height:10px;height:10px;color:#262626;">314</div>
<div class="t" style="left:533.50px;width:300px;text-align:center;top:382px;font-size:9.25px;line-height:10px;height:10px;color:#262626;">327</div>
<div class="t " style="left:380.50px;top:410px;font-size:9.25px;line-height:10px;height:10px;color:#262626;">Applied pressure on platform</div>
<div class="t " style="left:380.50px;top:421px;font-size:9.25px;line-height:10px;height:10px;color:#262626;">(kPa)<span class="q" style="width:7.2px;height:7.2px;font-size:5.62px;line-height:7.2px;border-color:#777;color:#777;top:0px">?</span></div>
<div class="t" style="left:383.50px;width:300px;text-align:center;top:410px;font-size:9.25px;line-height:10px;height:10px;color:#262626;">149</div>
<div class="t" style="left:433.50px;width:300px;text-align:center;top:410px;font-size:9.25px;line-height:10px;height:10px;color:#262626;">271</div>
<div class="t" style="left:483.50px;width:300px;text-align:center;top:410px;font-size:9.25px;line-height:10px;height:10px;color:#262626;">149</div>
<div class="t" style="left:533.50px;width:300px;text-align:center;top:410px;font-size:9.25px;line-height:10px;height:10px;color:#262626;">271</div>
<div class="t " style="left:380.50px;top:437px;font-size:9.25px;line-height:10px;height:10px;color:#262626;">Factor of safety</div>
<div class="t" style="left:383.50px;width:300px;text-align:center;top:437px;font-size:9.25px;line-height:10px;height:10px;color:#262626;">2.12</div>
<div class="t" style="left:433.50px;width:300px;text-align:center;top:437px;font-size:9.25px;line-height:10px;height:10px;color:#262626;">1.24</div>
<div class="t" style="left:483.50px;width:300px;text-align:center;top:437px;font-size:9.25px;line-height:10px;height:10px;color:#262626;">2.11</div>
<div class="t" style="left:533.50px;width:300px;text-align:center;top:437px;font-size:9.25px;line-height:10px;height:10px;color:#262626;">1.21</div>
<div class="t " style="left:380.50px;top:453px;font-size:9.25px;line-height:10px;height:10px;color:#262626;">Edge distance, L<sub>e</sub> (m)<span class="q" style="width:7.2px;height:7.2px;font-size:5.62px;line-height:7.2px;border-color:#777;color:#777;top:0px">?</span></div>
<div class="t" style="left:408.50px;width:300px;text-align:center;top:453px;font-size:9.25px;line-height:10px;height:10px;color:#262626;">≥ 2 m</div>
<div class="t " style="left:375.60px;top:472px;font-size:7.0px;line-height:7px;height:7px;color:#e4557b;">Note: Global stability and settlement have not been evaluated in this analysis and should be verified prior to</div>
<div class="t " style="left:375.60px;top:480px;font-size:7.0px;line-height:7px;height:7px;color:#e4557b;">construction.<span class="q" style="width:7.8px;height:7.8px;font-size:6.08px;line-height:7.8px;border-color:#444;color:#444;top:1px">?</span></div>
<svg class="b" style="left:375px;top:492px" width="285" height="145" viewBox="375 492 285 145">
<defs><pattern id="sand" width="3" height="3" patternUnits="userSpaceOnUse"><rect width="3" height="3" fill="#f4deb8"/><rect x="0.5" y="0.5" width="0.8" height="0.8" fill="#e4c590"/><rect x="2" y="2" width="0.8" height="0.8" fill="#e9cc9b"/></pattern></defs>
<path d="M415.7 614.2 L486.9 566.5 L645 566.5 L645 614.2 Z" fill="#cfcfcf" stroke="none"/>
<rect x="415.7" y="614.2" width="229.3" height="12.8" fill="url(#sand)"/>
<path d="M645 614.2 H415.7 V627 H645" fill="none" stroke="#555" stroke-width="0.6"/>
<path d="M415.7 614.2 L486.9 566.5 H645" fill="none" stroke="#444" stroke-width="0.7"/>
<path d="M644.8 498.6 V630" stroke="#444" stroke-width="0.8"/>
<path d="M643.5 589.5 L647.5 590.7 L643.5 592" fill="none" stroke="#444" stroke-width="0.6"/>
<path d="M487 590.7 H645" stroke="#f2c14a" stroke-width="0.7"/>
<path d="M488.5 590.7 H645" stroke="#f0a800" stroke-width="1.5" stroke-dasharray="3 6.1"/>
<path d="M487 612.4 H645" stroke="#f2c14a" stroke-width="0.7"/>
<path d="M488.5 612.4 H645" stroke="#f0a800" stroke-width="1.5" stroke-dasharray="3 6.1"/>
<path d="M486.9 567.5 V587.5" stroke="#777" stroke-width="0.6" stroke-dasharray="2 1.4"/>
<path d="M486.9 566 V531.6 H536.5 M550 531.6 H599.1 V543.4 M599.1 531.6 V530.2" fill="none" stroke="#666" stroke-width="0.65"/>
<path d="M486.9 531.6 l2.6 -0.8 v1.6 Z" fill="#666"/>
<text x="538.6" y="533.8" font-size="8" font-style="italic" font-family="Liberation Sans, sans-serif" font-weight="700" fill="#161616">L<tspan font-size="5.8" dy="2">e</tspan></text>
<rect x="599" y="543.4" width="19.7" height="23.3" fill="#0e0e0e"/>
<rect x="599" y="543.4" width="19.7" height="4.2" fill="#505050"/>
<path d="M599 544.5 H618.7" stroke="#8a8a8a" stroke-width="0.5"/>
<path d="M599 545.9 H618.7" stroke="#8a8a8a" stroke-width="0.5"/>
<rect x="599" y="549" width="19.7" height="2.20" fill="#b5b5b5"/>
<rect x="599" y="553.8" width="19.7" height="1.50" fill="#f0f0f0"/>
<rect x="599" y="558.3" width="19.7" height="1.80" fill="#f0f0f0"/>
<rect x="599" y="563.3" width="19.7" height="1.60" fill="#c8c8c8"/>
<text x="605.9" y="518.4" font-size="7.4" font-style="italic" font-family="Liberation Sans, sans-serif" font-weight="700" fill="#161616">P<tspan font-size="5.2" dx="0.9" dy="1.7">T</tspan></text>
<path d="M610.3 521.9 V529" stroke="#333" stroke-width="0.6"/><path d="M610.3 534.4 l-1.5 -5.9 h3 Z" fill="#222"/>
<path d="M644.7 503.1 H634.6 Q630.6 503.1 630.6 507.1 V536.4 Q630.6 540.4 634.6 540.4 H644.7" fill="none" stroke="#444" stroke-width="0.7"/>
<path d="M630.6 507 H629.3 Q628.5 507 628.5 508 V533" fill="none" stroke="#444" stroke-width="0.7"/>
<rect x="628.3" y="525" width="2.3" height="8" rx="0.8" fill="#fff" stroke="#444" stroke-width="0.6"/>
<path d="M644.7 508.1 H634.4 Q633.2 508.1 633.2 509.3 V521.3 Q633.2 522.5 634.4 522.5 H644.7" fill="none" stroke="#444" stroke-width="0.7"/>
<path d="M636 540.4 V542.2 M636 542.2 H644.7 M636.3 542.2 L638.5 546.4" fill="none" stroke="#444" stroke-width="0.7"/>
<path d="M625.6 546.6 H644.7" fill="none" stroke="#444" stroke-width="0.7"/>
<path d="M625.6 547.8 H644.7" fill="none" stroke="#999" stroke-width="0.5" stroke-dasharray="1 0.8"/>
<path d="M625.6 559.5 H644.7 M625.6 561 H644.7" fill="none" stroke="#8a8a8a" stroke-width="0.5"/>
<rect x="622" y="543.4" width="3.6" height="19.7" rx="0.8" fill="#fff" stroke="#444" stroke-width="0.7"/>
<path d="M623.8 545 V562" stroke="#bbb" stroke-width="0.4" stroke-dasharray="1 1"/>
<path d="M621.2 566 L622.2 563.1 H625.4 L626.5 566 Z" fill="#fff" stroke="#444" stroke-width="0.7"/>
<path d="M618.7 549.3 L622 547.3" stroke="#666" stroke-width="0.5"/>
<text x="538" y="552" font-size="6.75" font-family="Liberation Sans, sans-serif" font-weight="700" fill="#161616">TRACK / MAT</text>
<path d="M582 549.8 C590 549.8 591 561 599 561.6" fill="none" stroke="#555" stroke-width="0.5"/>
<text x="528" y="583" font-size="6.58" font-family="Liberation Sans, sans-serif" font-weight="700" fill="#161616">STABILIZED PLATFORM</text>
<path d="M527 580.6 C522 581 519 583 516.8 584.6 M607.4 580.2 C612 579.4 615 576.5 618 573.2" fill="none" stroke="#555" stroke-width="0.5"/>
<text x="563" y="605.8" font-size="6.33" font-family="Liberation Sans, sans-serif" font-weight="700" fill="#161616">INTERAX GEOGRID</text>
<path d="M562 603 C557 603.5 555.5 609 552.6 612" fill="none" stroke="#555" stroke-width="0.5"/>
<text x="534.2" y="623.3" font-size="6.33" font-family="Liberation Sans, sans-serif" font-weight="700" fill="#161616">SUBGRADE</text>
<path d="M533 620.6 C528 621 525 623 521 624.2 M573.8 619.8 C579 619.6 582 618 585 616.4" fill="none" stroke="#555" stroke-width="0.5"/>
<path d="M435.9 587.3 V577.3 H460" fill="none" stroke="#777" stroke-width="0.6"/>
<text x="436.5" y="572.8" font-size="6.3" font-style="italic" letter-spacing="1.15" font-family="Liberation Sans, sans-serif" font-weight="700" fill="#161616">2 (min)</text>
<text x="430.3" y="585.8" font-size="6.3" font-style="italic" font-family="Liberation Sans, sans-serif" font-weight="700" fill="#161616">1</text>
<text x="414" y="589" font-size="6.4" text-anchor="end" font-family="Liberation Sans, sans-serif" font-weight="700" fill="#161616">EXISTING</text>
<text x="414" y="597" font-size="6.4" text-anchor="end" font-family="Liberation Sans, sans-serif" font-weight="700" fill="#161616">GRADE</text>
<path d="M416 586.7 C424 586.7 425 603 432 613.6" fill="none" stroke="#555" stroke-width="0.5"/>
</svg>
</body></html>
